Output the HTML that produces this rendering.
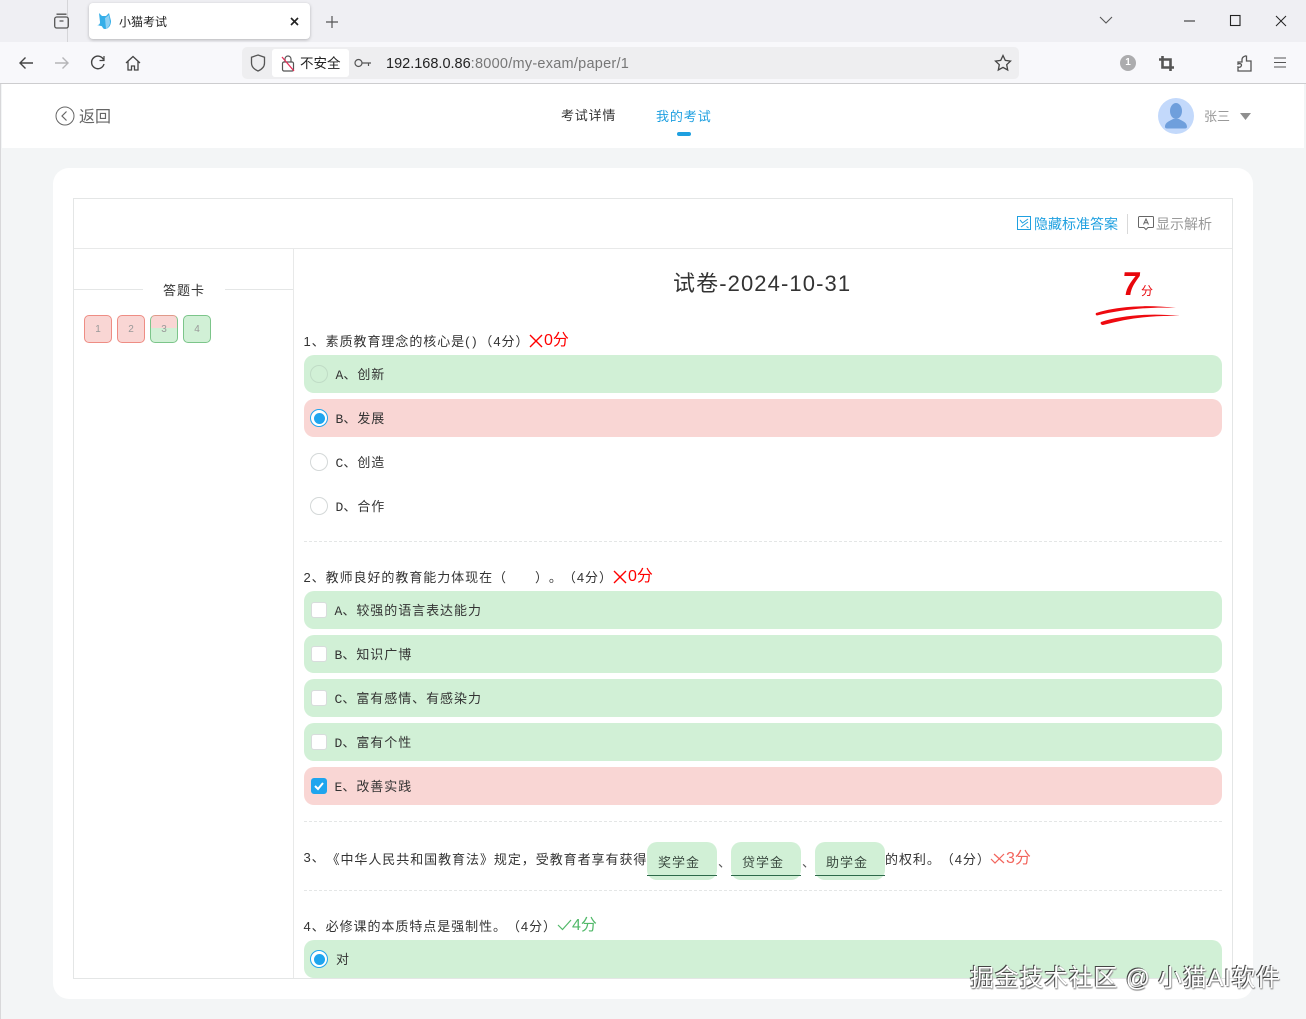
<!DOCTYPE html>
<html lang="zh"><head><meta charset="utf-8"><title>小猫考试</title>
<style>
html,body{margin:0;padding:0;width:1306px;height:1019px;overflow:hidden;background:#f3f5f6}
body{position:relative;font-family:"Liberation Sans","Noto Sans CJK SC",sans-serif;color:#333;text-spacing-trim:space-all}
.a{position:absolute;white-space:nowrap}
.t{font-size:13px;line-height:18px;letter-spacing:.95px;color:#333;margin-top:1px}
.m{font-family:"Liberation Mono",monospace;font-size:13px;letter-spacing:.1px}
.bar{position:absolute;left:304px;width:918px;height:38px;border-radius:10px}
.g{background:#d1f0d6}.r{background:#f9d6d4}
.rd{position:absolute;left:310px;width:16px;height:16px;border:1px solid #d4d8d8;border-radius:50%;background:#fff}
.rd.on{border:1px solid #1fa5ee;background:#fff}
.rd.on:after{content:"";position:absolute;left:2.5px;top:2.5px;width:11px;height:11px;border-radius:50%;background:#1fa5ee}
.ck{position:absolute;left:311px;width:14px;height:14px;border:1px solid #d8dcdc;border-radius:3px;background:#fff}
.num{position:absolute;top:315px;width:26px;height:26px;border-radius:5px;border:1px solid;font-size:10px;line-height:27px;text-align:center;color:#999}
.dash{position:absolute;left:304px;width:918px;border-top:1px dashed #e4e6e6;height:0}
.blank{position:absolute;top:842px;width:70px;height:38px;background:#d1f0d6;border-radius:10px}
.blank i{position:absolute;left:0;right:0;top:33px;height:1px;background:#2d6a4a}
.blank span{position:absolute;left:11px;top:12px;font-size:13px;line-height:18px;letter-spacing:1px;color:#3b4a40}
.sc{color:#f00;font-size:16px;line-height:20px}
svg{position:absolute;overflow:visible}
</style></head><body>

<!-- browser chrome -->
<div class="a" style="left:0;top:0;width:1306px;height:42px;background:#efeff3"></div>
<div class="a" style="left:0;top:42px;width:1306px;height:41px;background:#f8f8fb"></div>
<div class="a" style="left:0;top:83px;width:1306px;height:1px;background:#cdcdcf"></div>
<div class="a" style="left:67px;top:0;width:1px;height:42px;background:#d5d5d8"></div>
<svg style="left:54px;top:13px" width="16" height="16" fill="none" stroke="#555" stroke-width="1.3"><rect x=".7" y="4" width="13.6" height="11" rx="2"/><path d="M2.5 1.2h10M5.5 8h4"/></svg>
<div class="a" style="left:89px;top:3px;width:221px;height:36px;background:#fff;border-radius:4px;box-shadow:0 1px 3px rgba(0,0,0,.25)"></div>
<svg style="left:96px;top:12px" width="18" height="18"><path d="M3 1l3 3h4l3-3 2 8c0 5-3 8-6 8-3 0-2-3-4-3L1 13c2 0 3-1 3-3z" fill="#35aee8"/><path d="M9 6l4-3 1 7c0 3-2 6-4 7z" fill="#8ed0f3"/></svg>
<div class="a" style="left:119px;top:13px;font-size:12px;line-height:18px;color:#222">小猫考试</div>
<svg style="left:290px;top:17px" width="9" height="9" stroke="#222" stroke-width="1.6"><path d="M1 1l7 7M8 1L1 8"/></svg>
<svg style="left:325px;top:15px" width="14" height="14" stroke="#555" stroke-width="1.2"><path d="M7 1v12M1 7h12"/></svg>
<svg style="left:1099px;top:16px" width="14" height="9" fill="none" stroke="#555" stroke-width="1.1"><path d="M1 1l6 6 6-6"/></svg>
<svg style="left:1184px;top:20px" width="11" height="2" stroke="#222" stroke-width="1"><path d="M0 1h11"/></svg>
<svg style="left:1230px;top:15px" width="11" height="12" fill="none" stroke="#222" stroke-width="1.1"><rect x=".5" y=".5" width="9.5" height="10"/></svg>
<svg style="left:1275px;top:15px" width="12" height="12" stroke="#222" stroke-width="1"><path d="M1 1l10 10M11 1L1 11"/></svg>

<svg style="left:18px;top:55px" width="16" height="16" fill="none" stroke="#444" stroke-width="1.4"><path d="M15 8H2M7.5 2.500L2 8l5.500 5.500"/></svg>
<svg style="left:54px;top:55px" width="16" height="16" fill="none" stroke="#b5b5b8" stroke-width="1.4"><path d="M1 8h13M8.500 2.500L14 8l-5.500 5.500"/></svg>
<svg style="left:90px;top:55px" width="16" height="16" fill="none" stroke="#444" stroke-width="1.4"><path d="M13.500 4.500A6.300 6.300 0 1 0 14 9"/><path d="M14 1v4.500H9.500" stroke-width="1.2"/></svg>
<svg style="left:125px;top:55px" width="16" height="16" fill="none" stroke="#444" stroke-width="1.3"><path d="M1 8l7-6.500L15 8M3 6.500V15h3.500v-4h3v4H13V6.500"/></svg>

<div class="a" style="left:242px;top:47px;width:777px;height:32px;background:#eeeef0;border-radius:5px"></div>
<svg style="left:250px;top:54px" width="16" height="18" fill="none" stroke="#555" stroke-width="1.3"><path d="M8 1l6.500 2.200V9c0 4-3 6.500-6.500 8C4.500 15.500 1.500 13 1.500 9V3.200z"/></svg>
<div class="a" style="left:272px;top:49px;width:77px;height:28px;background:#fff;border-radius:3px"></div>
<svg style="left:281px;top:55px" width="14" height="17" fill="none" stroke="#555" stroke-width="1.2"><rect x="1.500" y="7" width="11" height="9" rx="1.500"/><path d="M4 7V4a3 3 0 0 1 6 0v3"/><path d="M1 2l12 14" stroke="#e5315a" stroke-width="1.300"/></svg>
<div class="a" style="left:300px;top:55px;font-size:13.500px;line-height:18px;color:#222">不安全</div>
<svg style="left:354px;top:58px" width="18" height="10" fill="none" stroke="#555" stroke-width="1.200"><circle cx="4.500" cy="5" r="3.500"/><path d="M8 5h9M14.500 5v3"/></svg>
<div class="a" style="left:386px;top:55px;font-size:14.500px;line-height:19px;color:#222">192.168.0.86<span style="color:#777;letter-spacing:.25px">:8000/my-exam/paper/1</span></div>
<svg style="left:994px;top:54px" width="18" height="18" fill="none" stroke="#444" stroke-width="1.300"><path d="M9 1.500l2.300 4.900 5.200.7-3.800 3.600 1 5.300L9 13.400l-4.700 2.600 1-5.300L1.500 7.100l5.200-.7z"/></svg>
<div class="a" style="left:1120px;top:55px;width:16px;height:16px;border-radius:50%;background:#acacae;color:#fff;font-size:10px;line-height:16px;text-align:center;font-weight:bold">1</div>
<svg style="left:1159px;top:56px" width="15" height="15" fill="none" stroke="#555" stroke-width="2.600"><path d="M3.500 0v11.500H15M0 3.500h11.500V15"/></svg>
<svg style="left:1237px;top:54px" width="15" height="18" fill="none" stroke="#555" stroke-width="1.300"><path d="M1 8h4V5.500C5 2 9.500 2 9.500 1.500V7H14v10H1v-4c2.500 1 3.500-1 3.500-2S3 9 1 10z"/></svg>
<svg style="left:1274px;top:57px" width="12" height="11" stroke="#555" stroke-width="1.100"><path d="M0 1h12M0 5.500h12M0 10h12"/></svg>

<!-- page header -->
<div class="a" style="left:2px;top:84px;width:1302px;height:64px;background:#fff"></div>
<div class="a" style="left:0;top:84px;width:1px;height:935px;background:#d8d8da"></div>
<svg style="left:55px;top:106px" width="20" height="20" fill="none" stroke="#666" stroke-width="1"><circle cx="10" cy="10" r="9"/><path d="M11.500 5.500L7 10l4.500 4.500" stroke-width="1.200"/></svg>
<div class="a" style="left:79px;top:108px;font-size:16px;line-height:20px;color:#666">返回</div>
<div class="a" style="left:561px;top:107px;font-size:13px;line-height:18px;letter-spacing:.8px;color:#333">考试详情</div>
<div class="a" style="left:656px;top:108px;font-size:13px;line-height:18px;letter-spacing:.9px;color:#1fa0e0">我的考试</div>
<div class="a" style="left:677px;top:132px;width:14px;height:4px;border-radius:2px;background:#1fa0e0"></div>
<div class="a" style="left:1158px;top:98px;width:36px;height:36px;border-radius:50%;background:#c3d9fb;overflow:hidden"></div>
<svg style="left:1158px;top:98px" width="36" height="36" fill="#6f9fdc"><ellipse cx="18" cy="13" rx="6" ry="8"/><path d="M7 29c0-5 5-6 8-8h6c3 2 8 3 8 8 0 1-1 1.500-2 1.500H9c-1 0-2-.5-2-1.500z"/></svg>
<div class="a" style="left:1204px;top:108px;font-size:13px;line-height:18px;color:#999">张三</div>
<svg style="left:1240px;top:113px" width="11" height="7" fill="#8f8f8f"><path d="M0 0h11L5.500 7z"/></svg>

<!-- card -->
<div class="a" style="left:53px;top:168px;width:1200px;height:831px;background:#fff;border-radius:16px"></div>
<div class="a" style="left:73px;top:198px;width:1158px;height:779px;border:1px solid #e4e6e6"></div>
<div class="a" style="left:74px;top:248px;width:1158px;height:1px;background:#e8e9e9"></div>
<div class="a" style="left:293px;top:249px;width:1px;height:729px;background:#e8e9e9"></div>

<svg style="left:1017px;top:216px" width="14" height="14" fill="none" stroke="#1fa0e0" stroke-width="1"><rect x=".5" y=".5" width="13" height="13"/><path d="M3 4l2.500 3L11 3M4 11l7-5M9.500 10.500l2 1.500"/></svg>
<div class="a" style="left:1034px;top:215px;font-size:14px;line-height:18px;color:#1fa0e0">隐藏标准答案</div>
<div class="a" style="left:1127px;top:214px;width:1px;height:20px;background:#d9d9d9"></div>
<svg style="left:1138px;top:216px" width="16" height="15" fill="none" stroke="#666" stroke-width="1"><path d="M1.500 .5h13a1 1 0 0 1 1 1v9a1 1 0 0 1-1 1H10l-2 2-2-2H1.500a1 1 0 0 1-1-1v-9a1 1 0 0 1 1-1z"/><path d="M5.500 8.500L8 3l2.500 5.500M6.500 6.800h3"/></svg>
<div class="a" style="left:1156px;top:215px;font-size:14px;line-height:18px;color:#999">显示解析</div>

<!-- answer card -->
<div class="a" style="left:74px;top:289px;width:69px;height:1px;background:#e4e6e6"></div>
<div class="a" style="left:225px;top:289px;width:68px;height:1px;background:#e4e6e6"></div>
<div class="a" style="left:163px;top:282px;font-size:13px;line-height:18px;letter-spacing:1px;color:#333">答题卡</div>
<div class="num" style="left:84px;background:#f9d6d4;border-color:#ee8d84">1</div>
<div class="num" style="left:117px;background:#f9d6d4;border-color:#ee8d84">2</div>
<div class="num" style="left:150px;background:linear-gradient(#f9d6d4 0 46%,#d1f0d6 46%);border-color:#e09a8a #7cc58a #7cc58a">3</div>
<div class="num" style="left:183px;background:#d1f0d6;border-color:#7cc58a">4</div>

<!-- title and score -->
<div class="a" style="left:673px;top:269px;font-size:22px;line-height:30px;letter-spacing:1.1px;color:#333">试卷-2024-10-31</div>
<div class="a" style="left:1122px;top:263px;font-size:33px;line-height:42px;color:#e8060c;font-weight:bold;transform:skewX(-6deg)">7</div>
<div class="a" style="left:1141px;top:283px;font-size:12px;line-height:16px;color:#e8060c">分</div>
<svg style="left:1094px;top:304px" width="90" height="24" fill="#ee0a10"><path d="M2 9C20 3 50 0 82 4 60 2.500 30 5 3 11.500 1.500 11 1.500 10 2 9z"/><path d="M7 18C28 11 58 9 86 12 60 11 35 14 9 21 7 21 6 19 7 18z"/></svg>

<!-- Q1 -->
<div class="a t" style="left:303.500px;top:332px">1、素质教育理念的核心是<span style="letter-spacing:2.800px">()</span>（4分）</div>
<svg style="left:529px;top:334px" width="14" height="14" stroke="#f00" stroke-width="1.400"><path d="M1 1l12 12M13 1L1 13"/></svg>
<div class="a sc" style="left:544px;top:331px">0分</div>
<div class="bar g" style="top:355px"></div>
<div class="rd" style="top:365px;background:#d1f0d6;border-color:#c0dcc6"></div>
<div class="a t" style="left:335.500px;top:365px"><span class="m">A</span>、创新</div>
<div class="bar r" style="top:399px"></div>
<div class="rd on" style="top:409px"></div>
<div class="a t" style="left:335.500px;top:409px"><span class="m">B</span>、发展</div>
<div class="rd" style="top:453px"></div>
<div class="a t" style="left:335.500px;top:453px"><span class="m">C</span>、创造</div>
<div class="rd" style="top:497px"></div>
<div class="a t" style="left:335.500px;top:497px"><span class="m">D</span>、合作</div>
<div class="dash" style="top:541px"></div>

<!-- Q2 -->
<div class="a t" style="left:303.500px;top:568px">2、教师良好的教育能力体现在（<span style="display:inline-block;width:28px"></span>）。（4分）</div>
<svg style="left:613px;top:570px" width="14" height="14" stroke="#f00" stroke-width="1.400"><path d="M1 1l12 12M13 1L1 13"/></svg>
<div class="a sc" style="left:628px;top:567px">0分</div>
<div class="bar g" style="top:591px"></div><div class="ck" style="top:602px"></div>
<div class="a t" style="left:334.500px;top:601px"><span class="m">A</span>、较强的语言表达能力</div>
<div class="bar g" style="top:635px"></div><div class="ck" style="top:646px"></div>
<div class="a t" style="left:334.500px;top:645px"><span class="m">B</span>、知识广博</div>
<div class="bar g" style="top:679px"></div><div class="ck" style="top:690px"></div>
<div class="a t" style="left:334.500px;top:689px"><span class="m">C</span>、富有感情、有感染力</div>
<div class="bar g" style="top:723px"></div><div class="ck" style="top:734px"></div>
<div class="a t" style="left:334.500px;top:733px"><span class="m">D</span>、富有个性</div>
<div class="bar r" style="top:767px"></div>
<div class="ck" style="top:778px;background:#1fa5ee;border-color:#1fa5ee"></div>
<svg style="left:311px;top:778px" width="16" height="16" fill="none" stroke="#fff" stroke-width="2"><path d="M4 8l3 3 5-6"/></svg>
<div class="a t" style="left:334.500px;top:777px"><span class="m">E</span>、改善实践</div>
<div class="dash" style="top:821px"></div>

<!-- Q3 -->
<div class="a t" style="left:303.500px;top:848px">3、</div>
<div class="a t" style="left:326.500px;top:850px">《中华人民共和国教育法》规定，受教育者享有获得</div>
<div class="blank" style="left:647px"><i></i><span>奖学金</span></div>
<div class="a t" style="left:718px;top:853px;color:#555">、</div>
<div class="blank" style="left:731px"><i></i><span>贷学金</span></div>
<div class="a t" style="left:802px;top:853px;color:#555">、</div>
<div class="blank" style="left:815px"><i></i><span>助学金</span></div>
<div class="a t" style="left:885px;top:850px">的权利。（4分）</div>
<svg style="left:990px;top:852px" width="15" height="13" fill="none" stroke="#f2645c" stroke-width="1.200"><path d="M1 7l4 4 9-9M4 2l10 9"/></svg>
<div class="a" style="left:1006px;top:849px;font-size:16px;line-height:20px;color:#f2645c">3分</div>
<div class="dash" style="top:890px"></div>

<!-- Q4 -->
<div class="a t" style="left:303.500px;top:917px">4、必修课的本质特点是强制性。（4分）</div>
<svg style="left:557px;top:919px" width="15" height="12" fill="none" stroke="#52b96a" stroke-width="1.200"><path d="M1 6l4.500 4.500L14 1"/></svg>
<div class="a" style="left:572px;top:916px;font-size:16px;line-height:20px;color:#52b96a">4分</div>
<div class="a" style="left:304px;top:940px;width:918px;height:38px;background:#d1f0d6;border-radius:10px 10px 0 10px"></div>
<div class="rd on" style="top:950px"></div>
<div class="a t" style="left:336px;top:950px">对</div>

<!-- watermark -->
<div class="a" style="left:970px;top:964px;font-size:24px;line-height:30px;color:#fff;letter-spacing:.7px;text-shadow:-1px -1px 0 #444,0 1px 1px #888,1px 1px 1px #aaa">掘金技术社区 @ 小猫AI软件</div>

</body></html>
